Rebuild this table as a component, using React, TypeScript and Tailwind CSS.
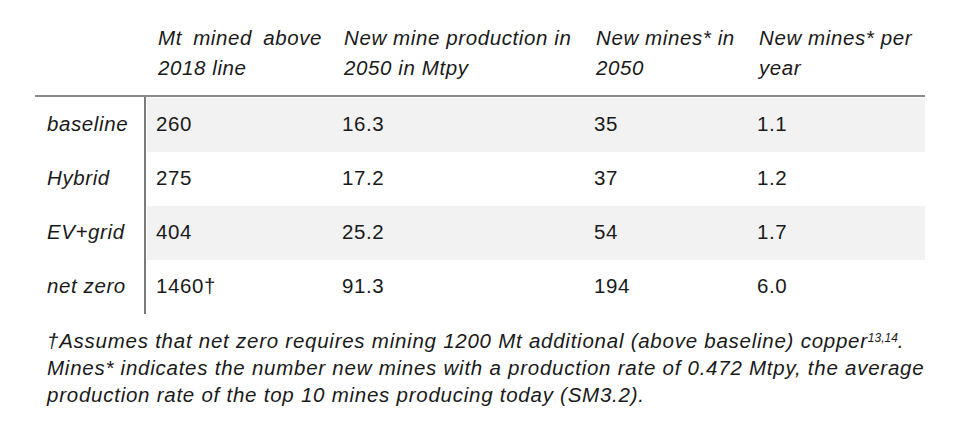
import React from 'react'

const rows = [
  { label: 'baseline', mt: '260', prod: '16.3', mines: '35', perYear: '1.1', shaded: true },
  { label: 'Hybrid', mt: '275', prod: '17.2', mines: '37', perYear: '1.2', shaded: false },
  { label: 'EV+grid', mt: '404', prod: '25.2', mines: '54', perYear: '1.7', shaded: true },
  { label: 'net zero', mt: '1460†', prod: '91.3', mines: '194', perYear: '6.0', shaded: false },
]

export default function App() {
  return (
    <div className="w-[966px] h-[433px] bg-white text-[#1a1a1a] font-['Liberation_Sans',Arial,sans-serif] pt-[23px] pl-[35px]">
      {/* header */}
      <div className="flex w-[890px] border-b-2 border-[#8a8a8a] pb-[12px] italic text-[20.5px] leading-[30px] tracking-[0.6px]">
        <div className="w-[113px]" />
        <div className="w-[186px] pl-[10px] pr-[12px] text-justify [text-align-last:left]">Mt mined above 2018 line</div>
        <div className="w-[252px] pl-[10px]">New mine production in 2050 in Mtpy</div>
        <div className="w-[163px] pl-[10px]">New mines* in 2050</div>
        <div className="w-[176px] pl-[10px]">New mines* per year</div>
      </div>

      {/* body */}
      <div className="flex w-[890px] text-[20.5px] tracking-[0.6px]">
        <div className="w-[111px] border-r-2 border-[#7a7a7a] pt-[1px]">
          {rows.map((r) => (
            <div key={r.label} className="h-[54px] flex items-center pl-[12px] pb-[2px] italic">
              {r.label}
            </div>
          ))}
        </div>
        <div className="flex-1 pt-[1px] pl-[1px]">
          {rows.map((r) => (
            <div key={r.label} className={`h-[54px] flex items-center pb-[2px] ${r.shaded ? 'bg-[#f2f2f2]' : ''}`}>
              <div className="w-[185px] pl-[9px]">{r.mt}</div>
              <div className="w-[252px] pl-[10px]">{r.prod}</div>
              <div className="w-[163px] pl-[10px]">{r.mines}</div>
              <div className="w-[176px] pl-[10px]">{r.perYear}</div>
            </div>
          ))}
        </div>
      </div>

      {/* footnote */}
      <div className="pl-[12px] pt-[13px] italic text-[20.5px] leading-[27px] tracking-[0.75px]">
        <p>
          †Assumes that net zero requires mining 1200 Mt additional (above baseline) copper
          <sup className="text-[12px] tracking-normal">13,14</sup>.
        </p>
        <p>
          Mines* indicates the number new mines with a production rate of 0.472 Mtpy, the average
        </p>
        <p>production rate of the top 10 mines producing today (SM3.2).</p>
      </div>
    </div>
  )
}
